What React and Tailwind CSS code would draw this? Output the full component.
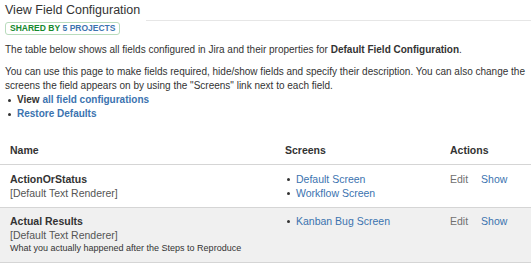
import React from "react";

const fields = [
  {
    name: "ActionOrStatus",
    renderer: "[Default Text Renderer]",
    screens: ["Default Screen", "Workflow Screen"],
  },
  {
    name: "Actual Results",
    renderer: "[Default Text Renderer]",
    description: "What you actually happened after the Steps to Reproduce",
    screens: ["Kanban Bug Screen"],
  },
];

function Dot() {
  return <span className="inline-block w-[3px] h-[3px] rounded-full bg-[#333] shrink-0" />;
}

export default function App() {
  return (
    <div className="w-[531px] h-[267px] overflow-hidden bg-white text-[#333] font-['Liberation_Sans',Arial,sans-serif]">
      {/* header */}
      <div className="flex h-[21px] pl-[5px]">
        <h1 className="text-[12.5px] leading-[21px] font-normal whitespace-nowrap">View Field Configuration</h1>
        <div className="flex-1 ml-[6px] border-b border-[#e6e6e6]" />
      </div>
      <div className="flex pl-[5px] mt-[1px]">
        <span className="inline-flex items-center h-[13px] px-[4px] border border-[#b9dcbd] rounded-[3px] text-[8.5px] font-bold uppercase leading-none">
          <span className="text-[#14892c]">Shared by</span>
          <span className="text-[#3b73af] ml-[2.5px]">5 projects</span>
        </span>
      </div>

      <div className="pl-[5px] text-[10px] leading-[14px]">
        <p className="mt-[8px]">
          The table below shows all fields configured in Jira and their properties for{" "}
          <b>Default Field Configuration</b>.
        </p>
        <p className="mt-[8px]">
          You can use this page to make fields required, hide/show fields and specify their description. You can also
          change the screens the field appears on by using the "Screens" link next to each field.
        </p>
        <ul className="font-bold">
          <li className="flex items-center gap-[6px] pl-[3px]">
            <Dot />
            <span>
              View <a className="text-[#3b73af]">all field configurations</a>
            </span>
          </li>
          <li className="flex items-center gap-[6px] pl-[3px]">
            <Dot />
            <a className="text-[#3b73af]">Restore Defaults</a>
          </li>
        </ul>
      </div>

      {/* table */}
      <div className="mt-[15px] text-[10.5px] leading-[14px]">
        <div className="grid grid-cols-[275px_165px_1fr] font-bold border-b border-[#d5d5d5] py-[7px]">
          <div className="pl-[10px]">Name</div>
          <div className="pl-[10px]">Screens</div>
          <div className="pl-[10px]">Actions</div>
        </div>
        {fields.map((f, i) => (
          <div
            key={f.name}
            className={`grid grid-cols-[275px_165px_1fr] border-b border-[#d5d5d5] ${
              i % 2 === 1 ? "bg-[#f0f0f0] pt-[6px] pb-[7px]" : "pt-[7px] pb-[7px]"
            }`}
          >
            <div className="pl-[10px]">
              <div className="font-bold">{f.name}</div>
              <div className="text-[#555]">{f.renderer}</div>
              {f.description && <div className="text-[9px] leading-[13px]">{f.description}</div>}
            </div>
            <div className="pl-[12px]">
              {f.screens.map((s) => (
                <div key={s} className="flex items-center gap-[6px]">
                  <Dot />
                  <a className="text-[#3b73af]">{s}</a>
                </div>
              ))}
            </div>
            <div className="pl-[10px] flex gap-[13px] items-start">
              <span className="text-[#707070]">Edit</span>
              <a className="text-[#3b73af]">Show</a>
            </div>
          </div>
        ))}
      </div>
    </div>
  );
}
